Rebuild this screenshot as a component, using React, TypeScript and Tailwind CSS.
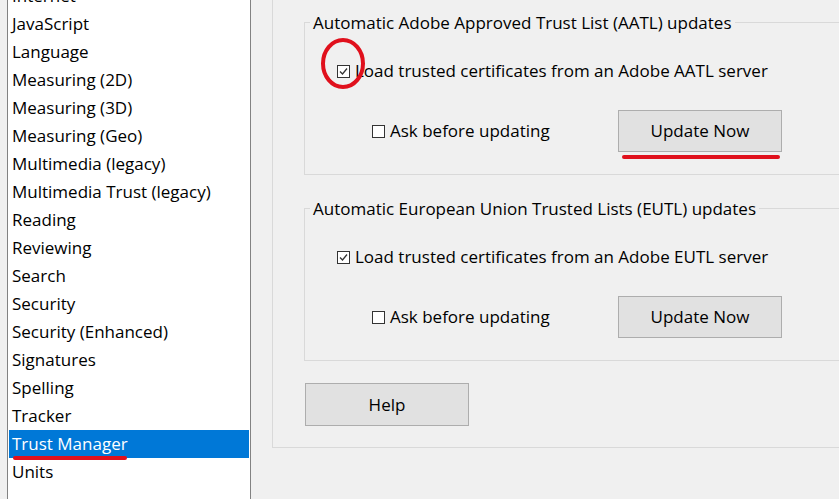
import React from 'react'

const items = [
  'Internet', 'JavaScript', 'Language', 'Measuring (2D)', 'Measuring (3D)', 'Measuring (Geo)',
  'Multimedia (legacy)', 'Multimedia Trust (legacy)', 'Reading', 'Reviewing', 'Search', 'Security',
  'Security (Enhanced)', 'Signatures', 'Spelling', 'Tracker', 'Trust Manager', 'Units',
]

const Check = ({ checked }: { checked: boolean }) => (
  <svg width="13" height="13" viewBox="0 0 13 13" className="shrink-0">
    <rect x="0.5" y="0.5" width="12" height="12" fill="#fff" stroke="#333" />
    {checked && <path d="M3 6.5 L5.5 9 L10 3.5" fill="none" stroke="#333" strokeWidth="1.3" />}
  </svg>
)

const Group = ({ title, server, circled, underlined }: { title: string; server: string; circled?: boolean; underlined?: boolean }) => (
  <div className="border border-r-0 border-[#d9d9d9] pb-[22px]">
    <div className="-mt-[12px] ml-[5px] px-[3px] w-fit bg-[#f0f0f0] leading-[24px] whitespace-nowrap">{title}</div>
    <div className="relative mt-[22px] h-[28px] pl-[32px] flex items-center gap-[5px] whitespace-nowrap">
      <Check checked />
      <span>{server}</span>
      {circled && (
        <svg className="absolute left-[15px] top-[-20px]" width="46" height="53" viewBox="0 0 46 53">
          <ellipse cx="23" cy="26.5" rx="20" ry="23.5" fill="none" stroke="#e0101c" strokeWidth="4" />
        </svg>
      )}
    </div>
    <div className="mt-[25px] flex items-center pl-[67px]">
      <div className="w-[246px] flex items-center gap-[5px] whitespace-nowrap">
        <Check checked={false} />
        <span>Ask before updating</span>
      </div>
      <div className="relative">
        <button className="w-[164px] h-[42px] bg-[#e1e1e1] border border-[#adadad]">Update Now</button>
        {underlined && <div className="absolute left-[4px] top-[45px] w-[158px] h-[4px] rounded-full bg-[#e0101c]" />}
      </div>
    </div>
  </div>
)

export default function App() {
  return (
    <div className="w-[839px] h-[499px] bg-[#f0f0f0] flex overflow-hidden text-[17px] text-black" style={{ fontFamily: '"Open Sans", "Noto Sans", sans-serif' }}>
      <div className="pl-[7px] h-full shrink-0">
        <div className="w-[244px] h-full bg-white border-l border-r border-[#828282] p-px overflow-hidden">
          <div className="-mt-[19px]">
            {items.map((it) => (
              <div key={it} className={`relative h-[28px] leading-[28px] pl-[3px] whitespace-nowrap ${it === 'Trust Manager' ? 'bg-[#0078d7] text-white' : ''}`}>
                {it}
                {it === 'Trust Manager' && <div className="absolute left-[4px] bottom-[-2px] w-[114px] h-[4px] rounded-full bg-[#e0101c]" />}
              </div>
            ))}
          </div>
        </div>
      </div>
      <div className="flex-1 pl-[21px]">
        <div className="h-[448px] border-l border-b border-[#d9d9d9] pt-[22px] pl-[31px]">
          <Group title="Automatic Adobe Approved Trust List (AATL) updates" server="Load trusted certificates from an Adobe AATL server" circled underlined />
          <div className="mt-[33px]">
            <Group title="Automatic European Union Trusted Lists (EUTL) updates" server="Load trusted certificates from an Adobe EUTL server" />
          </div>
          <button className="mt-[22px] ml-px w-[164px] h-[43px] bg-[#e1e1e1] border border-[#adadad]">Help</button>
        </div>
      </div>
    </div>
  )
}
